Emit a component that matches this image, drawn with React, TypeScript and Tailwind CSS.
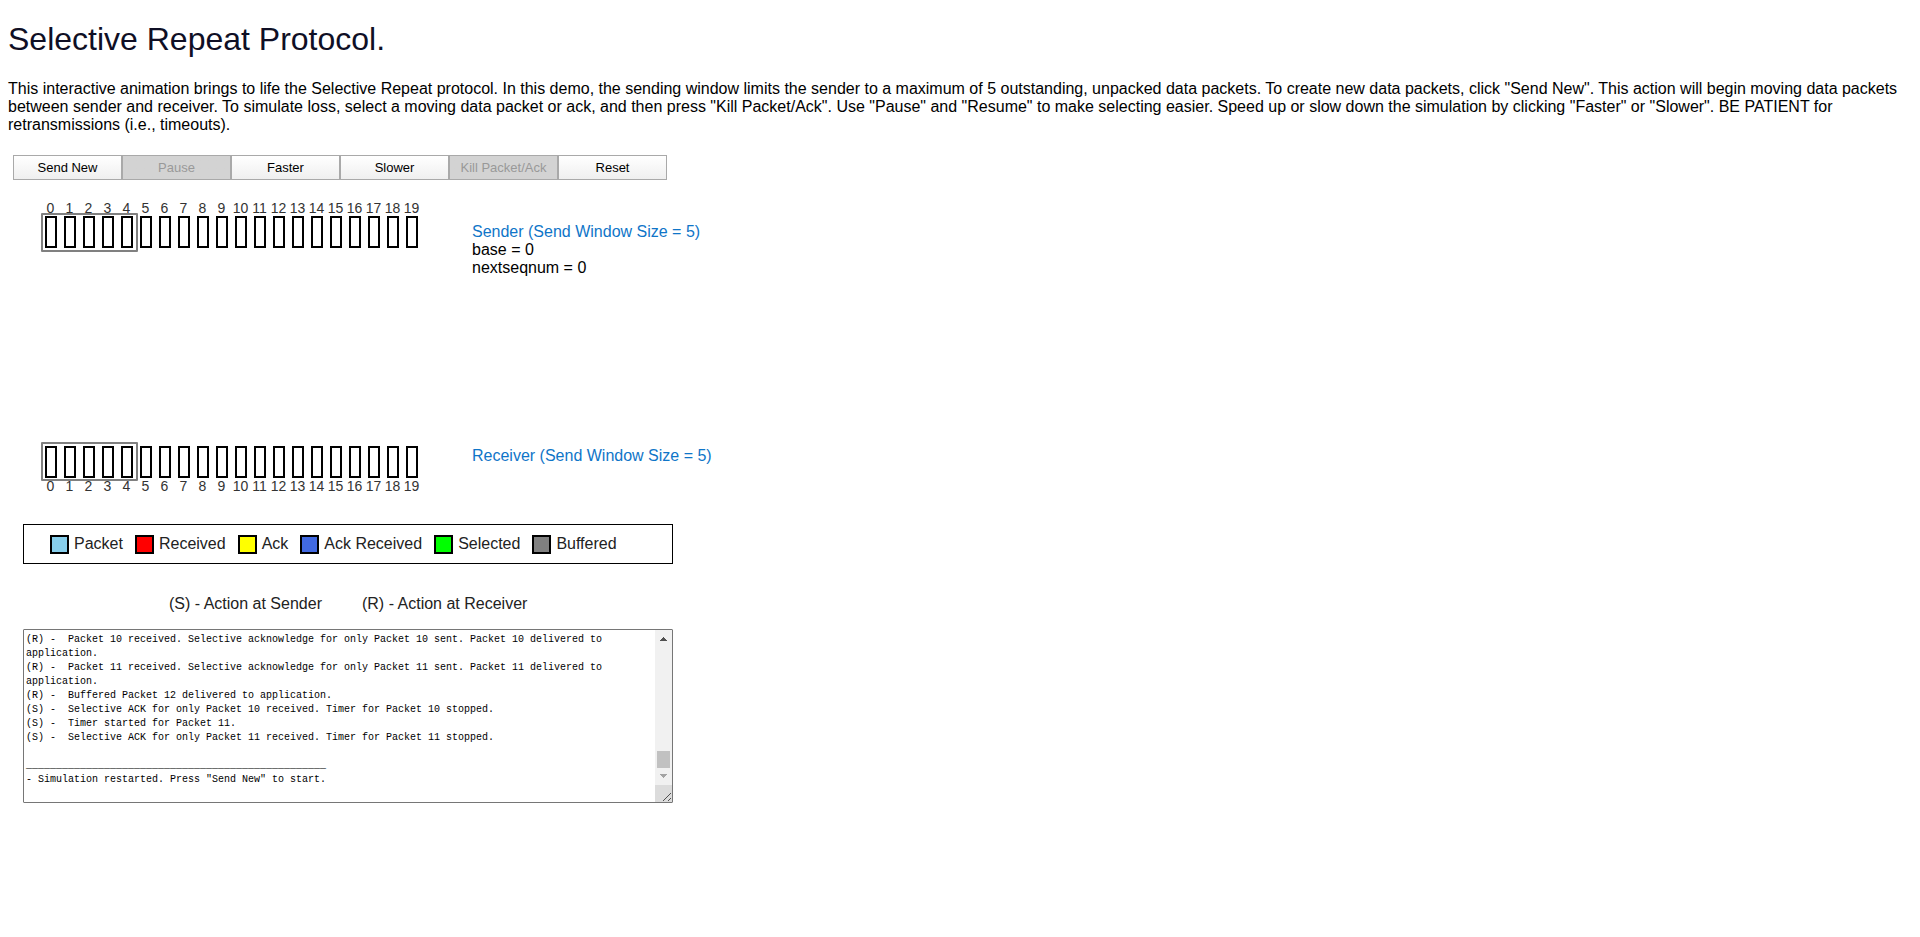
import { useState } from "react";

const slots = Array.from({ length: 20 }, (_, i) => i);

const legend = [
  { label: "Packet", color: "bg-[#87ceeb]" },
  { label: "Received", color: "bg-[#ff0000]" },
  { label: "Ack", color: "bg-[#ffff00]" },
  { label: "Ack Received", color: "bg-[#4169e1]" },
  { label: "Selected", color: "bg-[#00ff00]" },
  { label: "Buffered", color: "bg-[#808080]" },
];

const actions = [
  { label: "Send New", disabled: false },
  { label: "Pause", disabled: true },
  { label: "Faster", disabled: false },
  { label: "Slower", disabled: false },
  { label: "Kill Packet/Ack", disabled: true },
  { label: "Reset", disabled: false },
];

const initialLog = [
  "(R) -  Packet 10 received. Selective acknowledge for only Packet 10 sent. Packet 10 delivered to application.",
  "(R) -  Packet 11 received. Selective acknowledge for only Packet 11 sent. Packet 11 delivered to application.",
  "(R) -  Buffered Packet 12 delivered to application.",
  "(S) -  Selective ACK for only Packet 10 received. Timer for Packet 10 stopped.",
  "(S) -  Timer started for Packet 11.",
  "(S) -  Selective ACK for only Packet 11 received. Timer for Packet 11 stopped.",
  "",
  "_".repeat(50),
  "- Simulation restarted. Press \"Send New\" to start.",
].join("\n");

function Numbers() {
  return (
    <div className="flex text-sm leading-4 text-[#333]">
      {slots.map((n) => (
        <span key={n} className="flex w-[19px] justify-center">
          {n}
        </span>
      ))}
    </div>
  );
}

function Slots({ windowTop }: { windowTop: string }) {
  return (
    <div className="relative flex">
      {slots.map((n) => (
        <span key={n} className="flex w-[19px] justify-center">
          <span className="h-8 w-3 border-2 border-black" />
        </span>
      ))}
      <span className={`absolute left-0 h-[39px] w-[97px] rounded-[1px] border-2 border-[#808080] ${windowTop}`} />
    </div>
  );
}

export default function App() {
  const [log, setLog] = useState(initialLog);

  return (
    <main className="bg-white px-2 pt-5 font-['Liberation_Sans',Arial,sans-serif] text-base leading-[18px] text-black">
      <h1 className="text-[32px] leading-[38px] text-[#0f0f25]">Selective Repeat Protocol.</h1>
      <p className="mt-[22px]">
        This interactive animation brings to life the Selective Repeat protocol. In this demo, the sending window limits
        the sender to a maximum of 5 outstanding, unpacked data packets. To create new data packets, click "Send New".
        This action will begin moving data packets between sender and receiver. To simulate loss, select a moving data
        packet or ack, and then press "Kill Packet/Ack". Use "Pause" and "Resume" to make selecting easier. Speed up or
        slow down the simulation by clicking "Faster" or "Slower". BE PATIENT for retransmissions (i.e., timeouts).
      </p>

      <div className="mt-[21px] ml-[5px] flex">
        {actions.map((a) => (
          <button
            key={a.label}
            type="button"
            disabled={a.disabled}
            className="h-[25px] w-[109px] border border-[#a9a9a9] bg-linear-to-b from-white to-[#efefef] text-[13px] leading-4 text-black disabled:from-[#d3d3d3] disabled:to-[#d3d3d3] disabled:text-[#999]"
          >
            {a.label}
          </button>
        ))}
      </div>

      <div className="mt-5 ml-[33px] flex gap-[51px]">
        <section>
          <Numbers />
          <Slots windowTop="-top-[3px]" />
        </section>
        <section className="pt-[23px]">
          <h2 className="text-[#0f75c8]">Sender (Send Window Size = 5)</h2>
          <p>base = 0</p>
          <p>nextseqnum = 0</p>
        </section>
      </div>

      <div className="mt-[169px] ml-[33px] flex gap-[51px]">
        <section>
          <Slots windowTop="-top-1" />
          <Numbers />
        </section>
        <h2 className="pt-px text-[#0f75c8]">Receiver (Send Window Size = 5)</h2>
      </div>

      <ul className="mt-[30px] ml-[15px] flex h-10 w-[650px] items-center gap-3 border border-black pl-[26px] text-[#222]">
        {legend.map((l) => (
          <li key={l.label} className="flex items-center gap-[5px]">
            <span className={`size-[19px] border-2 border-black ${l.color}`} />
            {l.label}
          </li>
        ))}
      </ul>

      <p className="mt-[31px] ml-[161px] flex gap-10 text-[#222]">
        <span>(S) - Action at Sender</span>
        <span>(R) - Action at Receiver</span>
      </p>

      <div className="mt-4 ml-[15px] flex h-[174px] w-[650px] rounded-[1px] border border-[#767676]">
        <textarea
          aria-label="Simulation log"
          value={log}
          onChange={(e) => setLog(e.target.value)}
          className="min-w-0 flex-1 resize-none overflow-hidden px-0.5 pt-[3px] font-['Liberation_Mono',monospace] text-[10px] leading-[14px] text-black outline-none"
        />
        <div className="flex w-[17px] flex-col bg-[#f1f1f1]">
          <svg viewBox="0 0 17 17" className="size-[17px]" aria-hidden="true">
            <path d="M5 11h7v-1h-1v-1h-1v-1h-1v-1h-1v1h-1v1h-1v1h-1z" fill="#505050" />
          </svg>
          <div className="flex-1" />
          <div className="mx-0.5 h-[17px] bg-[#c1c1c1]" />
          <svg viewBox="0 0 17 17" className="size-[17px]" aria-hidden="true">
            <path d="M5 6h7v1h-1v1h-1v1h-1v1h-1v-1h-1v-1h-1v-1h-1z" fill="#a3a3a3" />
          </svg>
          <svg viewBox="0 0 17 17" className="size-[17px] bg-[#dcdcdc]" aria-hidden="true">
            <path d="M8 16L16 8M13 16L16 13" stroke="#505050" fill="none" />
          </svg>
        </div>
      </div>
    </main>
  );
}
